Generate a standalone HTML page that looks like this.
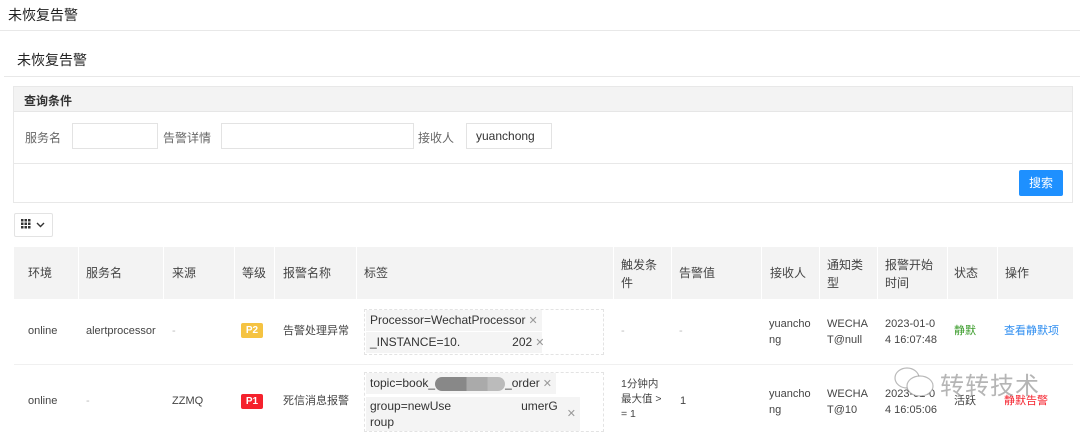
<!DOCTYPE html>
<html><head><meta charset="utf-8"><style>
*{margin:0;padding:0;box-sizing:border-box}
body{width:1080px;height:430px;overflow:hidden;background:#fff;font-family:"Liberation Sans","Noto Sans CJK SC",sans-serif;color:#333;position:relative;font-size:12px}
.a{position:absolute}
.hl{position:absolute;height:1px;background:#e8e8e8}
.inp{position:absolute;border:1px solid #e3e3e3;height:26px;background:#fff}
.lbl{position:absolute;color:#666;font-size:12px}
.th{position:absolute;font-size:12px;color:#444;line-height:18px}
.td{position:absolute;font-size:11px;color:#444;line-height:16px}
.vl{position:absolute;width:1px;background:#fff;top:247px;height:52px}
.tag{position:absolute;background:#f4f4f4;font-size:12px;color:#333;padding:0 4px;line-height:21px;height:21px;white-space:nowrap}
.x{color:#999;font-size:11px;margin-left:3px}
</style></head><body>
<div class="a" style="left:8px;top:5px;font-size:14px;color:#222">未恢复告警</div>
<div class="hl" style="left:0;top:30px;width:1080px"></div>
<div class="a" style="left:17px;top:50px;font-size:14px;color:#222">未恢复告警</div>
<div class="hl" style="left:4px;top:76px;width:1076px"></div>

<div class="a" style="left:13px;top:86px;width:1060px;height:117px;border:1px solid #e8e8e8"></div>
<div class="a" style="left:14px;top:87px;width:1058px;height:25px;background:#f3f3f3;border-bottom:1px solid #e6e6e6"></div>
<div class="a" style="left:24px;top:92px;font-size:12px;font-weight:bold;color:#333">查询条件</div>
<div class="lbl" style="left:25px;top:129px">服务名</div>
<div class="inp" style="left:72px;top:123px;width:86px"></div>
<div class="lbl" style="left:163px;top:129px">告警详情</div>
<div class="inp" style="left:221px;top:123px;width:193px"></div>
<div class="lbl" style="left:418px;top:129px">接收人</div>
<div class="inp" style="left:466px;top:123px;width:86px"></div>
<div class="a" style="left:476px;top:129px;font-size:12px;color:#333">yuanchong</div>
<div class="hl" style="left:14px;top:163px;width:1058px"></div>
<div class="a" style="left:1019px;top:170px;width:44px;height:26px;background:#1e90ff;border-radius:2px;color:#fff;font-size:12px;text-align:center;line-height:26px">搜索</div>

<div class="a" style="left:14px;top:213px;width:39px;height:24px;border:1px solid #e3e3e3;border-radius:2px"></div>
<svg class="a" style="left:21px;top:219px" width="26" height="12"><g fill="#333"><rect x="0" y="0" width="2.5" height="2.5"/><rect x="3.5" y="0" width="2.5" height="2.5"/><rect x="7" y="0" width="2.5" height="2.5"/><rect x="0" y="3.5" width="2.5" height="2.5"/><rect x="3.5" y="3.5" width="2.5" height="2.5"/><rect x="7" y="3.5" width="2.5" height="2.5"/><rect x="0" y="7" width="2.5" height="2.5"/><rect x="3.5" y="7" width="2.5" height="2.5"/><rect x="7" y="7" width="2.5" height="2.5"/></g><path d="M16 4l3.5 3.5 3.5-3.5" stroke="#333" stroke-width="1.4" fill="none"/></svg>

<div class="a" style="left:14px;top:247px;width:1059px;height:52px;background:#f3f3f3"></div>
<div class="vl" style="left:78px"></div><div class="vl" style="left:163px"></div><div class="vl" style="left:234px"></div><div class="vl" style="left:274px"></div><div class="vl" style="left:356px"></div><div class="vl" style="left:613px"></div><div class="vl" style="left:671px"></div><div class="vl" style="left:761px"></div><div class="vl" style="left:819px"></div><div class="vl" style="left:877px"></div><div class="vl" style="left:947px"></div><div class="vl" style="left:997px"></div>
<div class="th" style="left:28px;top:264px">环境</div>
<div class="th" style="left:86px;top:264px">服务名</div>
<div class="th" style="left:172px;top:264px">来源</div>
<div class="th" style="left:242px;top:264px">等级</div>
<div class="th" style="left:283px;top:264px">报警名称</div>
<div class="th" style="left:364px;top:264px">标签</div>
<div class="th" style="left:621px;top:256px">触发条<br>件</div>
<div class="th" style="left:679px;top:264px">告警值</div>
<div class="th" style="left:770px;top:264px">接收人</div>
<div class="th" style="left:827px;top:256px">通知类<br>型</div>
<div class="th" style="left:885px;top:256px">报警开始<br>时间</div>
<div class="th" style="left:954px;top:264px">状态</div>
<div class="th" style="left:1005px;top:264px">操作</div>
<div class="hl" style="left:14px;top:364px;width:1059px;background:#f0f0f0"></div>

<!-- row1 -->
<div class="td" style="left:28px;top:323px">online</div>
<div class="td" style="left:86px;top:323px">alertprocessor</div>
<div class="td" style="left:172px;top:323px;color:#bbb">-</div>
<div class="a" style="left:241px;top:323px;width:22px;height:15px;background:#f5c342;border-radius:2px;color:#fff;font-size:10px;font-weight:bold;text-align:center;line-height:15px">P2</div>
<div class="td" style="left:283px;top:323px">告警处理异常</div>
<div class="a" style="left:364px;top:309px;width:240px;height:46px;border:1px dashed #e3e3e3"></div>
<div class="tag" style="left:366px;top:310px">Processor=WechatProcessor<span class="x">✕</span></div>
<div class="tag" style="left:366px;top:332px;width:176px">_INSTANCE=10.<span style="display:inline-block;width:52px"></span>202<span class="x">✕</span></div>
<div class="td" style="left:621px;top:323px;color:#bbb">-</div>
<div class="td" style="left:679px;top:323px;color:#bbb">-</div>
<div class="td" style="left:769px;top:316px">yuancho<br>ng</div>
<div class="td" style="left:827px;top:316px">WECHA<br>T@null</div>
<div class="td" style="left:885px;top:316px">2023-01-0<br>4 16:07:48</div>
<div class="td" style="left:954px;top:323px;color:#3a9b2a">静默</div>
<div class="td" style="left:1004px;top:323px;color:#2f8ef0">查看静默项</div>

<!-- row2 -->
<div class="td" style="left:28px;top:393px">online</div>
<div class="td" style="left:86px;top:393px;color:#bbb">-</div>
<div class="td" style="left:172px;top:393px">ZZMQ</div>
<div class="a" style="left:241px;top:394px;width:22px;height:15px;background:#f5222d;border-radius:2px;color:#fff;font-size:10px;font-weight:bold;text-align:center;line-height:15px">P1</div>
<div class="td" style="left:283px;top:393px">死信消息报警</div>
<div class="a" style="left:364px;top:372px;width:240px;height:60px;border:1px dashed #e3e3e3"></div>
<div class="tag" style="left:366px;top:373px">topic=book_<span style="display:inline-block;width:70px;height:14px;vertical-align:middle;border-radius:7px;background:linear-gradient(90deg,#888 0 45%,#aaa 45% 75%,#bbb 75%)"></span>_order<span class="x">✕</span></div>
<div class="tag" style="left:366px;top:397px;width:214px;height:34px;line-height:16px;padding-top:1px;white-space:normal">group=newUse<span style="display:inline-block;width:70px"></span>umerG<span class="x" style="float:right;margin-top:8px">✕</span><br>roup</div>
<div class="td" style="left:621px;top:377px;font-size:10.5px;line-height:15px">1分钟内<br>最大值 &gt;<br>= 1</div>
<div class="td" style="left:680px;top:393px">1</div>
<div class="td" style="left:769px;top:386px">yuancho<br>ng</div>
<div class="td" style="left:827px;top:386px">WECHA<br>T@10</div>
<div class="td" style="left:885px;top:386px">2023-01-0<br>4 16:05:06</div>
<div class="td" style="left:954px;top:393px">活跃</div>
<div class="td" style="left:1004px;top:393px;color:#f5222d">静默告警</div>
<svg class="a" style="left:893px;top:366px" width="50" height="34"><g fill="none" stroke="rgba(130,130,130,.55)" stroke-width="1.2"><ellipse cx="14" cy="12" rx="12" ry="10" fill="#fff"/><ellipse cx="27" cy="20" rx="13" ry="10" fill="#fff"/></g></svg>
<div class="a" style="left:940px;top:366px;font-size:24px;color:rgba(120,120,120,.55);letter-spacing:1px">转转技术</div>
</body></html>
